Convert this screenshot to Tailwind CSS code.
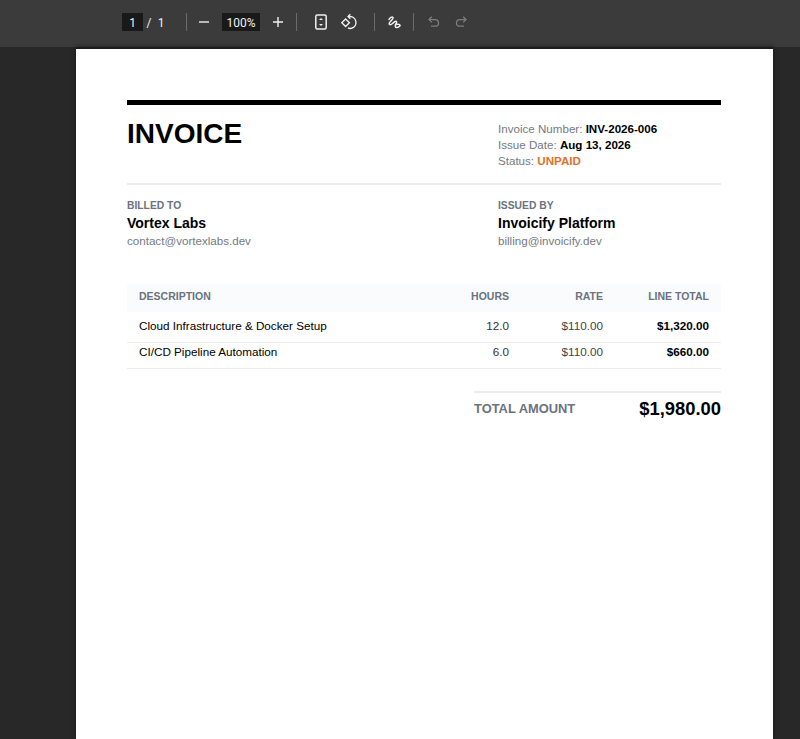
<!DOCTYPE html>
<html lang="en">
<head>
    <meta charset="UTF-8">
    <meta name="viewport" content="width=device-width, initial-scale=1.0">
    <title>Invoice INV-2026-006</title>
    <script src="https://cdn.jsdelivr.net/npm/@tailwindcss/browser@4"></script>
</head>
<body class="h-[739px] overflow-hidden bg-[#282828] font-['Liberation_Sans',Arial,sans-serif]">

    <!-- Viewer toolbar -->
    <div class="flex h-[47px] items-center bg-[#3b3b3b] pb-[3px] pl-[122px] font-['Roboto',sans-serif] text-[12px] text-[#f0f0f0]">
        <span class="flex h-[18px] w-[21px] items-center justify-center bg-[#191919] pt-[1px]">1</span>
        <span class="ml-[2px] w-[8px] pt-[1px] text-center">/</span>
        <span class="ml-[4px] w-[8px] pt-[1px] text-center">1</span>
        <span class="ml-[21px] h-[18px] w-px bg-[#6b6b6b]"></span>

        <svg class="ml-[11px] h-[12px] w-[12px]" viewBox="0 0 12 12" fill="none" stroke="#f0f0f0" stroke-width="1.4"><path d="M1 6h10"/></svg>
        <span class="ml-[12px] flex h-[18px] w-[38px] items-center justify-center bg-[#191919] pt-[1px]">100%</span>
        <svg class="ml-[12px] h-[12px] w-[12px]" viewBox="0 0 12 12" fill="none" stroke="#f0f0f0" stroke-width="1.4"><path d="M1 6h10M6 1v10"/></svg>
        <span class="ml-[12px] h-[18px] w-px bg-[#6b6b6b]"></span>

        <!-- fit to page -->
        <svg class="ml-[17px] h-[16px] w-[14px]" viewBox="0 0 14 16" fill="none" stroke="#f0f0f0" stroke-width="1.5"><rect x="1.800" y="1" width="10.400" height="14" rx="1.500"/><path d="M5 6 7 4l2 2zM5 10l2 2 2-2z" fill="#f0f0f0" stroke="none"/></svg>
        <!-- rotate -->
        <svg class="ml-[12px] h-[18px] w-[18px]" viewBox="0 0 18 18" fill="none" stroke="#f0f0f0" stroke-width="1.400"><path d="M1.800 9.800 5.600 6l3.800 3.800-3.800 3.800z"/><path d="M8.500 3.500h1.500a6 6 0 0 1 1.500 11.800 6 6 0 0 1-3.500-.3"/><path d="M10.300 1.300 8.100 3.500l2.200 2.200"/></svg>
        <span class="ml-[16px] h-[18px] w-px bg-[#6b6b6b]"></span>

        <!-- draw -->
        <svg class="ml-[11px] h-[16px] w-[16px]" viewBox="0 0 16 16" fill="none" stroke="#f0f0f0" stroke-width="1.500" stroke-linecap="round" stroke-linejoin="round"><path d="M3 5.500C4 3.500 6 2.500 7 3.500 8 4.800 3.500 7.500 3.200 9.500 3 11 5 11 6.500 9.500 8 8 9.500 6.500 10.500 7.500 11.500 8.700 8.700 10 9.300 12.500 9.800 14 12.500 13.800 14 11.800 14.500 10.500 12 9.800 9.500 10.500"/></svg>
        <span class="ml-[11px] h-[18px] w-px bg-[#6b6b6b]"></span>

        <!-- undo / redo, disabled -->
        <svg class="ml-[13px] h-[14px] w-[14px]" viewBox="0 0 14 14" fill="none" stroke="#7d7d7d" stroke-width="1.300"><path d="M4.800 1.800 2 4.600l2.800 2.800"/><path d="M2 4.600h6.200a3.300 3.300 0 0 1 0 6.600H4"/></svg>
        <svg class="ml-[13px] h-[14px] w-[14px]" viewBox="0 0 14 14" fill="none" stroke="#7d7d7d" stroke-width="1.300"><path d="M9.200 1.800 12 4.600 9.200 7.400"/><path d="M12 4.600H5.800a3.300 3.300 0 0 0 0 6.600H10"/></svg>
    </div>

    <!-- Page -->
    <div class="ml-[76px] h-[692px] w-[697px] border-t-2 border-[#1c1c1c] bg-white pt-[51px] pr-[52px] pl-[51px] shadow-[0_0_4px_#161616]">
        <div class="border-t-[5px] border-black">
            <!-- Header -->
            <div class="flex h-[80px] items-start border-b-2 border-[#ececec] pt-[12px]">
                <h1 class="w-[371px] text-[28px] leading-[34px] font-bold text-black">INVOICE</h1>
                <div class="pt-[4px] text-[11.600px] leading-[16px] text-[#75797f]">
                    <p>Invoice Number: <b class="text-black">INV-2026-006</b></p>
                    <p>Issue Date: <b class="text-black">Aug 13, 2026</b></p>
                    <p>Status: <b class="text-[#e0702a]">UNPAID</b></p>
                </div>
            </div>

            <!-- Parties -->
            <div class="flex pt-[14px]">
                <div class="w-[371px]">
                    <p class="text-[10.300px] leading-[14px] font-bold text-[#6b7280]">BILLED TO</p>
                    <p class="mt-[1px] text-[14px] leading-[19px] font-bold text-black">Vortex Labs</p>
                    <p class="text-[11.600px] leading-[16px] text-[#75797f]">contact@vortexlabs.dev</p>
                </div>
                <div>
                    <p class="text-[10.300px] leading-[14px] font-bold text-[#6b7280]">ISSUED BY</p>
                    <p class="mt-[1px] text-[14px] leading-[19px] font-bold text-black">Invoicify Platform</p>
                    <p class="text-[11.600px] leading-[16px] text-[#75797f]">billing@invoicify.dev</p>
                </div>
            </div>

            <!-- Line items -->
            <table class="mt-[35px] w-full table-fixed border-collapse text-[11.700px]">
                <thead>
                    <tr class="h-[28px] bg-[#f9fbfc] text-[10.500px] font-bold text-[#6b7280]">
                        <th class="pb-[3px] pl-[12px] text-left">DESCRIPTION</th>
                        <th class="w-[90px] pb-[3px] text-right">HOURS</th>
                        <th class="w-[94px] pb-[3px] text-right">RATE</th>
                        <th class="w-[118px] pr-[12px] pb-[3px] text-right">LINE TOTAL</th>
                    </tr>
                </thead>
                <tbody>
                    <tr class="h-[30px] border-b border-[#ececec] align-middle">
                        <td class="pb-[1px] pl-[12px] text-black">Cloud Infrastructure &amp; Docker Setup</td>
                        <td class="pb-[1px] text-right text-[#333333]">12.0</td>
                        <td class="pb-[1px] text-right text-[#444444]">$110.00</td>
                        <td class="pr-[12px] pb-[1px] text-right font-bold text-black">$1,320.00</td>
                    </tr>
                    <tr class="h-[26px] border-b border-[#ececec] align-top">
                        <td class="pl-[12px] text-black">CI/CD Pipeline Automation</td>
                        <td class="text-right text-[#333333]">6.0</td>
                        <td class="text-right text-[#444444]">$110.00</td>
                        <td class="pr-[12px] text-right font-bold text-black">$660.00</td>
                    </tr>
                </tbody>
            </table>

            <!-- Total -->
            <div class="mt-[22px] ml-auto flex h-[32px] w-[247px] items-center justify-between border-t-2 border-[#ececec] pt-[2px]">
                <span class="text-[12.900px] font-bold text-[#6b7280]">TOTAL AMOUNT</span>
                <span class="text-[18.400px] font-bold text-black">$1,980.00</span>
            </div>
        </div>
    </div>
</body>
</html>
